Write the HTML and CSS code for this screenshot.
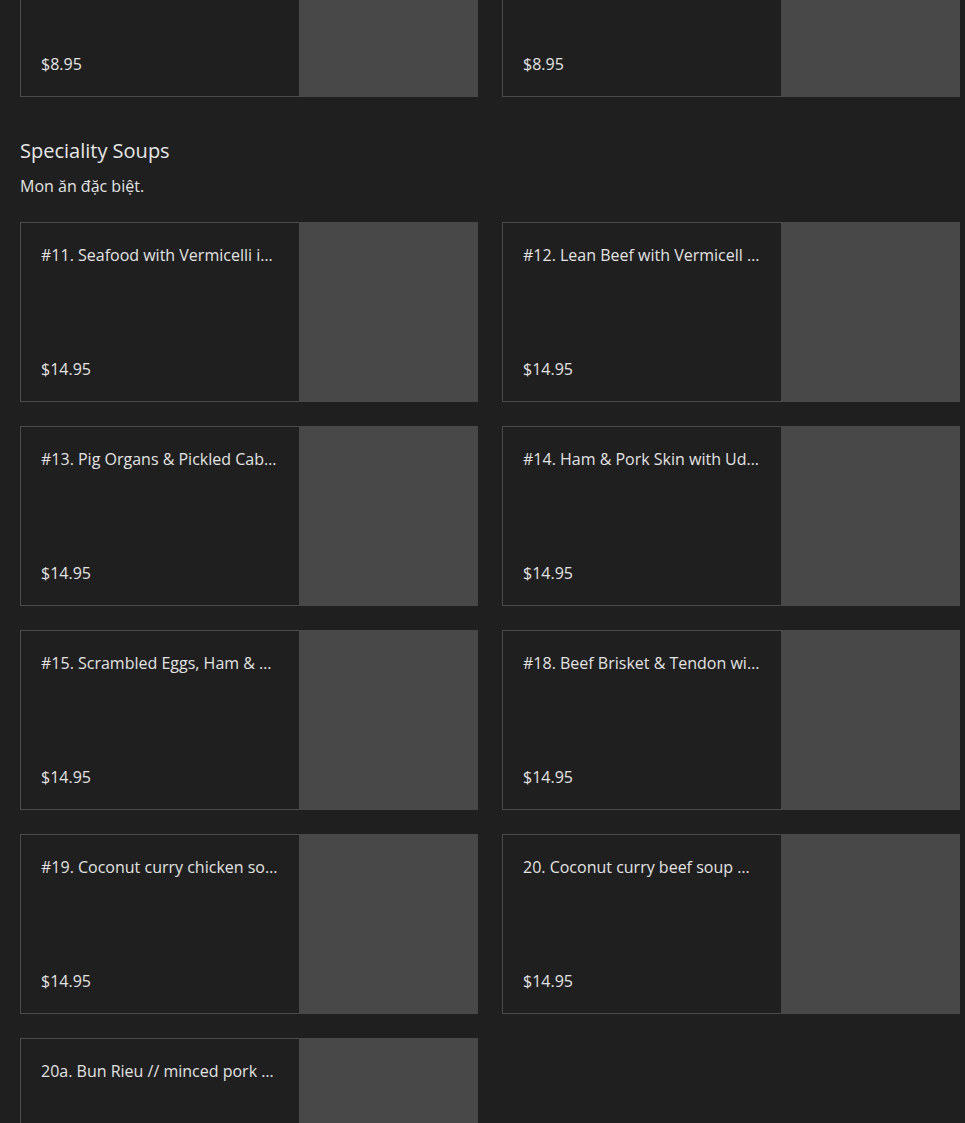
FILE: index.html
```html
<!DOCTYPE html>
<html lang="en">
<head>
    <meta charset="UTF-8">
    <meta name="viewport" content="width=device-width, initial-scale=1.0">
    <title>Menu</title>
    <link rel="stylesheet" href="styles.css">
</head>
<body>
    <div class="menu">
        <div class="item-grid">
            <div class="item-card">
                <div class="item-info">
                    <p class="item-name">#9. Pork Chop</p>
                    <p class="item-price">$8.95</p>
                </div>
                <div class="item-photo"></div>
            </div>
            <div class="item-card">
                <div class="item-info">
                    <p class="item-name">#10. Chicken</p>
                    <p class="item-price">$8.95</p>
                </div>
                <div class="item-photo"></div>
            </div>
        </div>

        <section class="menu-section">
            <h2 class="section-title">Speciality Soups</h2>
            <p class="section-desc">Mon ăn đặc biệt.</p>

            <div class="item-grid">
                <div class="item-card">
                    <div class="item-info">
                        <p class="item-name">#11. Seafood with Vermicelli in Crab Broth</p>
                        <p class="item-price">$14.95</p>
                    </div>
                    <div class="item-photo"></div>
                </div>
                <div class="item-card">
                    <div class="item-info">
                        <p class="item-name">#12. Lean Beef with Vermicell and Beef Balls</p>
                        <p class="item-price">$14.95</p>
                    </div>
                    <div class="item-photo"></div>
                </div>
                <div class="item-card">
                    <div class="item-info">
                        <p class="item-name">#13. Pig Organs &amp; Pickled Cabbage Soup</p>
                        <p class="item-price">$14.95</p>
                    </div>
                    <div class="item-photo"></div>
                </div>
                <div class="item-card">
                    <div class="item-info">
                        <p class="item-name">#14. Ham &amp; Pork Skin with Udon Noodles</p>
                        <p class="item-price">$14.95</p>
                    </div>
                    <div class="item-photo"></div>
                </div>
                <div class="item-card">
                    <div class="item-info">
                        <p class="item-name">#15. Scrambled Eggs, Ham &amp; Tomato Soup</p>
                        <p class="item-price">$14.95</p>
                    </div>
                    <div class="item-photo"></div>
                </div>
                <div class="item-card">
                    <div class="item-info">
                        <p class="item-name">#18. Beef Brisket &amp; Tendon with Rice Noodles</p>
                        <p class="item-price">$14.95</p>
                    </div>
                    <div class="item-photo"></div>
                </div>
                <div class="item-card">
                    <div class="item-info">
                        <p class="item-name">#19. Coconut curry chicken soup with noodles</p>
                        <p class="item-price">$14.95</p>
                    </div>
                    <div class="item-photo"></div>
                </div>
                <div class="item-card">
                    <div class="item-info">
                        <p class="item-name">20. Coconut curry beef soup with noodles</p>
                        <p class="item-price">$14.95</p>
                    </div>
                    <div class="item-photo"></div>
                </div>
                <div class="item-card">
                    <div class="item-info">
                        <p class="item-name">20a. Bun Rieu // minced pork and crab soup</p>
                        <p class="item-price">$14.95</p>
                    </div>
                    <div class="item-photo"></div>
                </div>
            </div>
        </section>
    </div>
</body>
</html>
```

FILE: styles.css
```css
* {
    margin: 0;
    padding: 0;
    box-sizing: border-box;
}

body {
    background: #1f1f1f;
    color: #e6e6e6;
    font-family: 'Open Sans', 'Noto Sans', sans-serif;
    overflow: hidden;
}

/* page is shown scrolled down a bit */
.menu {
    padding: 0 5px 0 20px;
    margin-top: -83px;
}

.item-grid {
    display: grid;
    grid-template-columns: repeat(2, minmax(0, 1fr));
    gap: 24px;
}

.item-card {
    display: flex;
    height: 180px;
    min-width: 0;
}

.item-info {
    flex: 1;
    min-width: 0;
    display: flex;
    flex-direction: column;
    justify-content: space-between;
    padding: 21px 20px;
    border: 1px solid #4b4b4b;
    border-right: none;
}

.item-name,
.item-price {
    font-size: 16px;
    line-height: 22px;
    color: #e3e3e3;
}

.item-name {
    white-space: nowrap;
    overflow: hidden;
    text-overflow: ellipsis;
}

.item-photo {
    width: 179px;
    flex-shrink: 0;
    background: #484848;
}

.menu-section {
    margin-top: 40px;
}

.section-title {
    font-size: 20px;
    font-weight: 400;
    line-height: 27px;
    color: #e8e8e8;
}

.section-desc {
    font-size: 16px;
    line-height: 22px;
    margin: 11px 0 25px;
    color: #e3e3e3;
}
```
